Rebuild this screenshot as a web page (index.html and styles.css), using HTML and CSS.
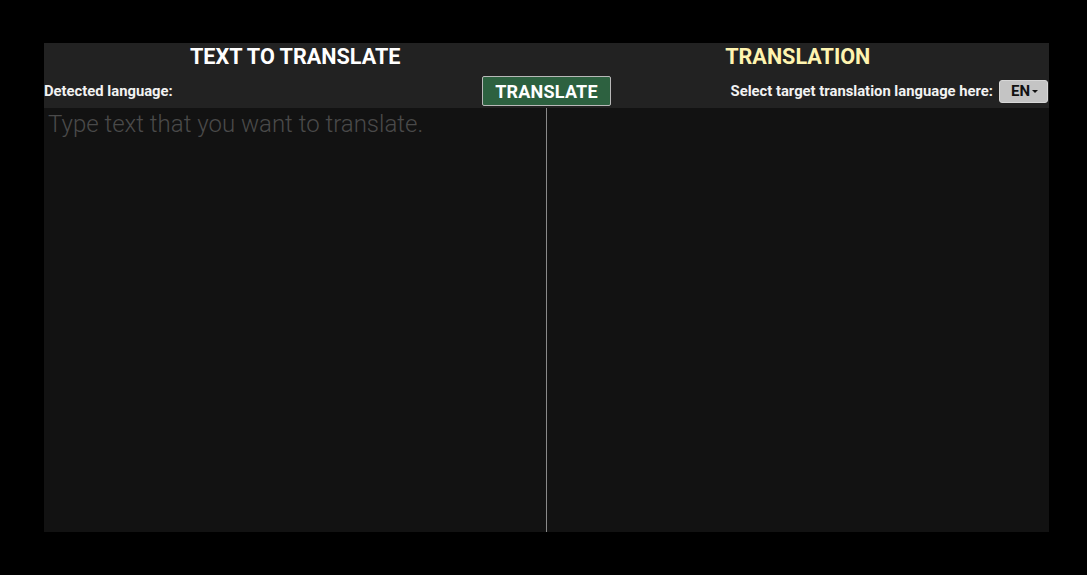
FILE: index.html
```html
<!DOCTYPE html>
<html>
<head>
<meta charset="utf-8">
<link rel="stylesheet" href="styles.css">
</head>
<body>
<div class="panel">
  <div class="head">
    <div class="titles">
      <h1 class="title">TEXT TO TRANSLATE</h1>
      <h1 class="title title-out">TRANSLATION</h1>
    </div>
    <div class="controls">
      <div class="detected">Detected language:</div>
      <button class="translate-btn">TRANSLATE</button>
      <div class="target">
        <span class="target-label">Select target translation language here:</span>
        <button class="lang-btn">EN<span class="caret"></span></button>
      </div>
    </div>
  </div>
  <div class="body">
    <textarea class="source" placeholder="Type text that you want to translate."></textarea>
    <div class="output"></div>
  </div>
</div>
</body>
</html>
```
FILE: styles.css
```css
html, body {
  margin: 0;
  padding: 0;
  background: #000;
  height: 100%;
}
body {
  padding: 43px 38px 0 44px;
  box-sizing: border-box;
  font-family: Roboto, "Liberation Sans", sans-serif;
}
.panel {
  width: 1005px;
  height: 489px;
  display: flex;
  flex-direction: column;
  background: #121212;
}
.head {
  background: #222222;
  height: 65px;
  display: flex;
  flex-direction: column;
}
.titles {
  display: flex;
  height: 27px;
  align-items: center;
}
.title {
  flex: 1;
  margin: 0;
  text-align: center;
  font-size: 21.6px;
  font-weight: 700;
  color: #ffffff;
}
.title-out {
  color: #fff4b0;
}
.controls {
  display: grid;
  grid-template-columns: 1fr auto 1fr;
  align-items: center;
  height: 34px;
  padding-top: 4px;
}
.detected {
  font-size: 14.8px;
  font-weight: 700;
  color: #f2f2f2;
}
.translate-btn {
  width: 129px;
  height: 30px;
  background: #2d6140;
  border: 1px solid #b8b8b8;
  border-radius: 2px;
  color: #ffffff;
  font-family: Roboto, "Liberation Sans", sans-serif;
  font-weight: 700;
  font-size: 18px;
  letter-spacing: 0.2px;
  padding: 0;
}
.target {
  display: flex;
  justify-content: flex-end;
  align-items: center;
  gap: 6px;
  padding-right: 1px;
}
.target-label {
  font-size: 14.8px;
  font-weight: 700;
  color: #f2f2f2;
}
.lang-btn {
  width: 49px;
  height: 23px;
  background: #c4c4c4;
  border: 1px solid #d8d8d8;
  border-radius: 3px;
  color: #111;
  font-family: Roboto, "Liberation Sans", sans-serif;
  font-weight: 700;
  font-size: 15px;
  display: flex;
  align-items: center;
  justify-content: center;
  padding: 0 0 0 2px;
}
.caret {
  display: inline-block;
  width: 0;
  height: 0;
  margin-left: 2px;
  border-left: 3px solid transparent;
  border-right: 3px solid transparent;
  border-top: 3px solid #111;
}
.body {
  flex: 1;
  display: flex;
}
.source {
  width: 503px;
  flex: none;
  box-sizing: border-box;
  background: #121212;
  border: none;
  border-right: 1px solid #8a8a8a;
  outline: none;
  resize: none;
  margin: 0;
  padding: 2px 4px;
  color: #ddd;
  font-family: Roboto, "Liberation Sans", sans-serif;
  font-weight: 300;
  font-size: 24px;
}
.source::placeholder {
  color: #4a4a4a;
}
.output {
  flex: 1;
}
```
